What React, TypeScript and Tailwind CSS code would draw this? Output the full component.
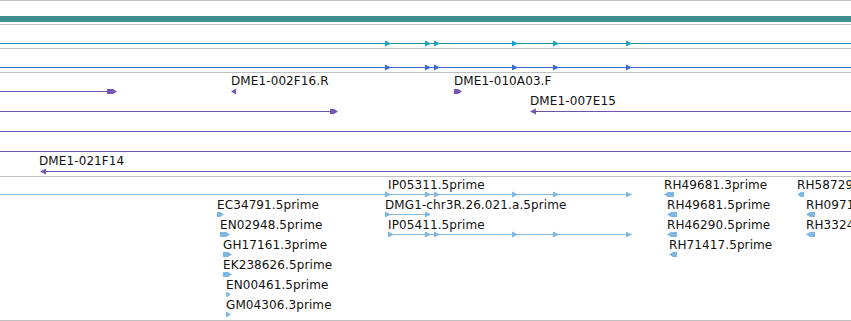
import React from "react";

type Mark = { x: number; kind: "tri" | "flagR" | "flagL" | "triL"; w?: number };
type Row = { y: number; from?: number; to?: number; marks: Mark[] };
type Lbl = { x: number; y: number; text: string };

const W = 851;

// draws one marker centred on the pixel row y
const markPoints = (m: Mark, y: number) => {
  const c = y + 0.5;
  const w = m.w ?? 6;
  switch (m.kind) {
    case "tri":
      return `${m.x},${c - 3} ${m.x + w},${c} ${m.x},${c + 3}`;
    case "triL":
      return `${m.x + w},${c - 3} ${m.x},${c} ${m.x + w},${c + 3}`;
    case "flagR":
      return `${m.x},${c - 2.5} ${m.x + w - 4},${c - 2.5} ${m.x + w},${c} ${m.x + w - 4},${c + 2.5} ${m.x},${c + 2.5}`;
    case "flagL":
      return `${m.x},${c} ${m.x + 4},${c - 2.5} ${m.x + w},${c - 2.5} ${m.x + w},${c + 2.5} ${m.x + 4},${c + 2.5}`;
  }
};

const Track: React.FC<{
  h: number;
  rows?: Row[];
  labels?: Lbl[];
  line: string;
  fill: string;
  children?: React.ReactNode;
  top?: boolean;
}> = ({ h, rows = [], labels = [], line, fill, children, top }) => (
  <div className={`relative overflow-hidden border-b border-[#c0c0c0] ${top ? "border-t" : ""}`} style={{ height: h + (top ? 2 : 1) }}>
    {children}
    <svg className="absolute left-0 top-0" width={W} height={h} shapeRendering="crispEdges">
      {rows.map((r, i) => (
        <g key={i}>
          {r.from !== undefined && (
            <line x1={r.from} x2={r.to ?? W} y1={r.y + 0.5} y2={r.y + 0.5} stroke={line} strokeWidth={1} />
          )}
          {r.marks.map((m, j) => (
            <polygon key={j} points={markPoints(m, r.y)} fill={fill} shapeRendering="auto" />
          ))}
        </g>
      ))}
    </svg>
    {labels.map((l, i) => (
      <span
        key={i}
        className="absolute whitespace-nowrap font-['DejaVu_Sans',sans-serif] text-[12px] leading-[14px] tracking-[0.1px] text-[#111]"
        style={{ left: l.x, top: l.y + 1 }}
      >
        {l.text}
      </span>
    ))}
  </div>
);

const chevrons = [385, 425, 434, 512, 553, 626];

const purpleRows: Row[] = [
  { y: 18, from: 0, to: 110, marks: [{ x: 107, kind: "flagR", w: 10 }, { x: 231, kind: "triL", w: 5 }, { x: 454, kind: "flagR", w: 8 }] },
  { y: 38, from: 0, to: 334, marks: [{ x: 330, kind: "flagR", w: 8 }] },
  { y: 38, from: 532, to: W, marks: [{ x: 530, kind: "triL", w: 6 }] },
  { y: 58, from: 0, to: W, marks: [] },
  { y: 78, from: 0, to: W, marks: [] },
  { y: 98, from: 42, to: W, marks: [{ x: 40, kind: "triL", w: 6 }] },
];

const purpleLabels: Lbl[] = [
  { x: 231, y: 0, text: "DME1-002F16.R" },
  { x: 454, y: 0, text: "DME1-010A03.F" },
  { x: 530, y: 20, text: "DME1-007E15" },
  { x: 39, y: 80, text: "DME1-021F14" },
];

const estRows: Row[] = [
  { y: 17, from: 0, to: 631, marks: chevrons.map((x) => ({ x, kind: "tri" as const })) },
  { y: 17, marks: [{ x: 664, kind: "flagL", w: 10 }, { x: 797, kind: "flagL", w: 7 }] },
  { y: 37, from: 385, to: 430, marks: [{ x: 385, kind: "tri" }, { x: 425, kind: "tri" }] },
  { y: 37, marks: [{ x: 217, kind: "flagR", w: 7 }, { x: 667, kind: "flagL", w: 10 }, { x: 806, kind: "flagL", w: 9 }] },
  { y: 57, from: 388, to: 631, marks: [388, 425, 434, 512, 553, 626].map((x) => ({ x, kind: "tri" as const })) },
  { y: 57, marks: [{ x: 220, kind: "flagR", w: 10 }, { x: 667, kind: "flagL", w: 10 }, { x: 806, kind: "flagL", w: 9 }] },
  { y: 77, marks: [{ x: 223, kind: "flagR", w: 9 }, { x: 669, kind: "flagL", w: 8 }] },
  { y: 97, marks: [{ x: 223, kind: "flagR", w: 9 }] },
  { y: 117, marks: [{ x: 226, kind: "flagR", w: 5 }] },
  { y: 137, marks: [{ x: 226, kind: "flagR", w: 5 }] },
];

const estLabels: Lbl[] = [
  { x: 388, y: 0, text: "IP05311.5prime" },
  { x: 664, y: 0, text: "RH49681.3prime" },
  { x: 797, y: 0, text: "RH58729.5prime" },
  { x: 385, y: 20, text: "DMG1-chr3R.26.021.a.5prime" },
  { x: 217, y: 20, text: "EC34791.5prime" },
  { x: 667, y: 20, text: "RH49681.5prime" },
  { x: 806, y: 20, text: "RH09713.5prime" },
  { x: 388, y: 40, text: "IP05411.5prime" },
  { x: 220, y: 40, text: "EN02948.5prime" },
  { x: 667, y: 40, text: "RH46290.5prime" },
  { x: 806, y: 40, text: "RH33245.5prime" },
  { x: 223, y: 60, text: "GH17161.3prime" },
  { x: 669, y: 60, text: "RH71417.5prime" },
  { x: 223, y: 80, text: "EK238626.5prime" },
  { x: 226, y: 100, text: "EN00461.5prime" },
  { x: 226, y: 120, text: "GM04306.3prime" },
];

export default function App() {
  return (
    <div className="w-[851px] h-[321px] overflow-hidden bg-white">
      <Track h={23} line="#3f8f8f" fill="#3f8f8f" top>
        <div className="absolute left-0 right-0 top-[15px] h-[6px] bg-[#3f8f8f]" />
      </Track>
      <Track h={23} line="#1b97ad" fill="#12a2c4" rows={[{ y: 18, from: 0, to: W, marks: chevrons.map((x) => ({ x, kind: "tri" as const })) }]} />
      <Track h={23} line="#3a67c2" fill="#3a6bd6" rows={[{ y: 18, from: 0, to: W, marks: chevrons.map((x) => ({ x, kind: "tri" as const })) }]} />
      <Track h={103} line="#6e54a6" fill="#7656b3" rows={purpleRows} labels={purpleLabels} />
      <Track h={143} line="#86b9e0" fill="#7fb6e2" rows={estRows} labels={estLabels} />
    </div>
  );
}
